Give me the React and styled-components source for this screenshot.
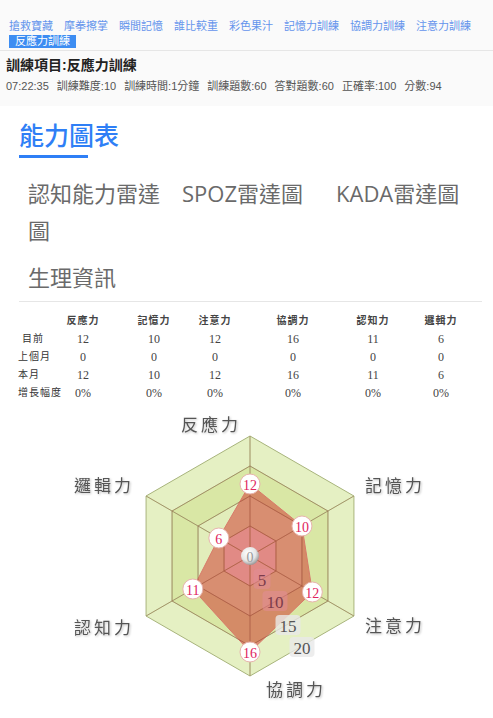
import React from "react";
import styled, { createGlobalStyle } from "styled-components";

const GlobalStyle = createGlobalStyle`
  html, body {
    margin: 0;
    padding: 0;
    background: #fff;
  }
  body {
    font-family: "Liberation Sans", "Noto Sans CJK TC", sans-serif;
    color: #333;
  }
`;

const NAV = ["搶救寶藏", "摩拳擦掌", "瞬間記憶", "誰比較重", "彩色果汁", "記憶力訓練", "協調力訓練", "注意力訓練", "反應力訓練"];
const ACTIVE = "反應力訓練";
const STATS = ["07:22:35", "訓練難度:10", "訓練時間:1分鐘", "訓練題數:60", "答對題數:60", "正確率:100", "分數:94"];
const TABS = ["認知能力雷達圖", "SPOZ雷達圖", "KADA雷達圖", "生理資訊"];
const AXES = ["反應力", "記憶力", "注意力", "協調力", "認知力", "邏輯力"];
const ROWS = [
  { label: "目前", values: ["12", "10", "12", "16", "11", "6"] },
  { label: "上個月", values: ["0", "0", "0", "0", "0", "0"] },
  { label: "本月", values: ["12", "10", "12", "16", "11", "6"] },
  { label: "增長幅度", values: ["0%", "0%", "0%", "0%", "0%", "0%"] },
];
const SCORES = [12, 10, 12, 16, 11, 6];

// radar geometry
const CX = 250;
const CY = 148;
const STEP = 6; // px per point, 20 points = 120px
const pt = (i, r) => {
  const a = ((-90 + 60 * i) * Math.PI) / 180;
  return [CX + r * Math.cos(a), CY + r * Math.sin(a)];
};
const hex = (r) => [0, 1, 2, 3, 4, 5].map((i) => pt(i, r).join(",")).join(" ");

const AXIS_LABELS = [
  { x: 211, y: 17 },
  { x: 395, y: 78 },
  { x: 395, y: 218 },
  { x: 296, y: 282 },
  { x: 104, y: 220 },
  { x: 104, y: 78 },
];
const SCALE = [
  { v: "5", x: 262, y: 171, w: 17, onRed: true },
  { v: "10", x: 275, y: 193, w: 25, onRed: true },
  { v: "15", x: 288, y: 217, w: 25 },
  { v: "20", x: 302, y: 239, w: 25 },
];
const BANDS = [
  { r: 120, fill: "#e5f0c3" },
  { r: 90, fill: "#d9e7a5" },
  { r: 60, fill: "#e2edbb" },
  { r: 30, fill: "#f5e4e6" },
];

const Page = styled.div`
  width: 493px;
  min-height: 718px;
  overflow: hidden;
`;

const TopBar = styled.header`
  background: #fafafa;
  padding: 19px 0 12px;
`;

const Nav = styled.nav`
  display: flex;
  flex-wrap: wrap;
  padding: 0 4px 1px;
  border-bottom: 1px solid #e6e6e6;
`;

const NavItem = styled.a`
  font-size: 11px;
  line-height: 13px;
  margin: 1px 1px 1px ${(p) => (p.$active ? "5px" : "0")};
  padding: 0 ${(p) => (p.$active ? "6px" : "5px")};
  color: ${(p) => (p.$active ? "#fff" : "#6494ec")};
  background: ${(p) => (p.$active ? "#3d8df2" : "transparent")};
  cursor: pointer;
  white-space: nowrap;
`;

const Title = styled.h2`
  margin: 4px 0 0;
  padding: 0 6px;
  font-size: 14px;
  line-height: 20px;
  font-weight: bold;
  color: #222;
`;

const Stats = styled.div`
  display: flex;
  gap: 8px;
  margin-top: 3px;
  padding: 0 6px;
  font-size: 11px;
  line-height: 16px;
  color: #555;
`;

const Content = styled.main`
  margin: 0 11px 0 19px;
`;

const Heading = styled.h1`
  display: inline-block;
  margin: 13px 0 0;
  padding-bottom: 6px;
  font-size: 25px;
  line-height: 30px;
  font-weight: 500;
  color: #2f7ff6;
  font-family: "Noto Sans CJK TC", sans-serif;
  border-bottom: 3px solid #2f7ff6;
  width: 69px;
  white-space: nowrap;
`;

const Tabs = styled.div`
  display: grid;
  grid-template-columns: repeat(3, 154px);
  margin-top: 12px;
  border-bottom: 1px solid #e6e6e6;
`;

const Tab = styled.div`
  padding: 5px 9px;
  font-family: "Open Sans", "Noto Sans CJK TC", sans-serif;
  font-size: 22px;
  line-height: 37px;
  color: #6a6a6a;
  cursor: pointer;
`;

const Table = styled.div`
  display: grid;
  grid-template-columns: 30px 70px 72px 50px 106px 54px 1fr;
  margin: 10px 0 0 -1px;
  font-family: "Liberation Serif", "Noto Sans CJK TC", serif;
  color: #333;
`;

const HeadCell = styled.div`
  font-size: 10px;
  letter-spacing: 1px;
  line-height: 18px;
  text-align: center;
  font-weight: bold;
  color: #444;
  white-space: nowrap;
`;

const RowLabel = styled.div`
  font-size: 10px;
  letter-spacing: 1px;
  line-height: 18px;
  white-space: nowrap;
  padding-left: ${(p) => (p.$indent ? "4px" : "0")};
`;

const Cell = styled.div`
  font-size: 12px;
  line-height: 18px;
  text-align: center;
  color: #444;
`;

const Chart = styled.svg`
  display: block;
  margin-top: 6px;
  font-family: "Liberation Serif", "Noto Sans CJK TC", serif;
`;

const AxisText = styled.text`
  font-size: 17px;
  letter-spacing: 3px;
  fill: #555;
`;

const ScoreText = styled.text`
  font-size: 14px;
  fill: #e0245e;
`;

const ScaleText = styled.text`
  font-size: 17px;
  fill: ${(p) => (p.$onRed ? "#7c3c4c" : "#555")};
`;

const RadarChart = () => {
  const poly = SCORES.map((v, i) => pt(i, v * STEP).join(",")).join(" ");
  return (
    <Chart width="493" height="308" viewBox="0 0 493 308">
      <defs>
        <radialGradient id="ball" cx="40%" cy="35%" r="70%">
          <stop offset="0%" stopColor="#ffffff" />
          <stop offset="60%" stopColor="#e6e6e6" />
          <stop offset="100%" stopColor="#8d8d8d" />
        </radialGradient>
        <filter id="soft" x="-10%" y="-30%" width="120%" height="160%">
          <feDropShadow dx="1" dy="1" stdDeviation="0.8" floodColor="#000" floodOpacity="0.25" />
        </filter>
      </defs>
      {BANDS.map((b) => (
        <polygon key={b.r} points={hex(b.r)} fill={b.fill} stroke="#a8b47c" strokeWidth="1" />
      ))}
      {[0, 1, 2, 3, 4, 5].map((i) => {
        const [x, y] = pt(i, 120);
        return <line key={i} x1={CX} y1={CY} x2={x} y2={y} stroke="#a8b47c" strokeWidth="1" />;
      })}
      <polygon points={poly} fill="rgba(208, 64, 52, 0.55)" stroke="#d87a6a" strokeWidth="1" />
      {[30, 60, 90].map((r) => (
        <polygon key={r} points={hex(r)} fill="none" stroke="rgba(150, 60, 50, 0.3)" strokeWidth="1" />
      ))}
      {[0, 1, 2, 3, 4, 5].map((i) => {
        const [x, y] = pt(i, 120);
        return <line key={i} x1={CX} y1={CY} x2={x} y2={y} stroke="rgba(150, 60, 50, 0.25)" strokeWidth="1" />;
      })}
      {AXES.map((a, i) => (
        <AxisText key={a} x={AXIS_LABELS[i].x} y={AXIS_LABELS[i].y} textAnchor="middle" dominantBaseline="central" filter="url(#soft)">
          {a}
        </AxisText>
      ))}
      {SCALE.map((s) => (
        <g key={s.v}>
          <rect
            x={s.x - s.w / 2}
            y={s.y - 10}
            width={s.w}
            height={20}
            rx="4"
            fill={s.onRed ? "rgba(225, 140, 150, 0.55)" : "rgba(232, 232, 232, 0.8)"}
          />
          <ScaleText x={s.x} y={s.y + 1} textAnchor="middle" dominantBaseline="central" $onRed={s.onRed}>
            {s.v}
          </ScaleText>
        </g>
      ))}
      {SCORES.map((v, i) => {
        const [x, y] = pt(i, v * STEP);
        return (
          <g key={i}>
            <circle cx={x} cy={y} r="10" fill="#fff" stroke="#e8b4ae" strokeWidth="1" />
            <ScoreText x={x} y={y + 1} textAnchor="middle" dominantBaseline="central">
              {v}
            </ScoreText>
          </g>
        );
      })}
      <circle cx={CX} cy={CY} r="9" fill="url(#ball)" />
      <text x={CX} y={CY + 1} textAnchor="middle" dominantBaseline="central" fontSize="14" fill="#9a9a9a">
        0
      </text>
    </Chart>
  );
};

export default function App() {
  return (
    <Page>
      <GlobalStyle />
      <TopBar>
        <Nav>
          {NAV.map((n) => (
            <NavItem key={n} $active={n === ACTIVE}>
              {n}
            </NavItem>
          ))}
        </Nav>
        <Title>訓練項目:反應力訓練</Title>
        <Stats>
          {STATS.map((s) => (
            <span key={s}>{s}</span>
          ))}
        </Stats>
      </TopBar>
      <Content>
        <Heading>能力圖表</Heading>
        <Tabs>
          {TABS.map((t) => (
            <Tab key={t}>{t}</Tab>
          ))}
        </Tabs>
        <Table>
          <div />
          {AXES.map((a) => (
            <HeadCell key={a}>{a}</HeadCell>
          ))}
          {ROWS.map((row) => (
            <React.Fragment key={row.label}>
              <RowLabel $indent={row.label === "目前"}>{row.label}</RowLabel>
              {row.values.map((v, i) => (
                <Cell key={i}>{v}</Cell>
              ))}
            </React.Fragment>
          ))}
        </Table>
      </Content>
      <RadarChart />
    </Page>
  );
}
